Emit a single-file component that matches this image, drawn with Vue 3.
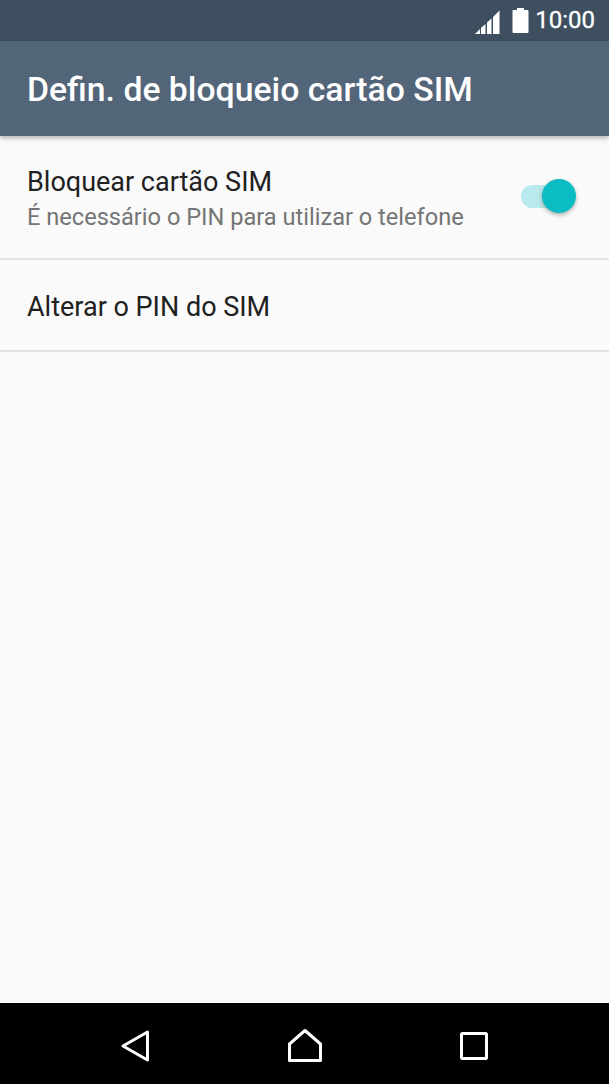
<script setup>
const rows = [
  { title: "Bloquear cartão SIM", sub: "É necessário o PIN para utilizar o telefone", toggle: true },
  { title: "Alterar o PIN do SIM" },
];
</script>

<template>
  <div class="screen">
    <div class="status">
      <svg class="signal" width="25" height="24" viewBox="0 0 25 24">
        <path d="M0 24 L5 19 V24 Z M6 18 L10.5 14 V24 H6 Z M12 12.5 L16.5 8.5 V24 H12 Z M18 7 L24.5 0.5 V24 H18 Z" fill="#fff" />
      </svg>
      <svg class="battery" width="17" height="25" viewBox="0 0 17 25">
        <path d="M5 0 H12 V2 H15.5 Q16.5 2 16.5 3 V24 Q16.5 25 15.5 25 H1.5 Q0.5 25 0.5 24 V3 Q0.5 2 1.5 2 H5 Z" fill="#fff" />
      </svg>
      <span class="clock">10:00</span>
    </div>
    <header class="bar">Defin. de bloqueio cartão SIM</header>
    <main class="list">
      <div v-for="row in rows" :key="row.title" class="row" :class="{ tall: row.sub }">
        <div class="texts">
          <div class="title">{{ row.title }}</div>
          <div v-if="row.sub" class="sub">{{ row.sub }}</div>
        </div>
        <div v-if="row.toggle" class="switch"><span class="knob"></span></div>
      </div>
    </main>
    <nav class="nav">
      <svg width="28" height="32" viewBox="0 0 28 32">
        <path d="M2 16 L26.5 2 V30 Z" fill="none" stroke="#fff" stroke-width="3" stroke-linejoin="round" />
      </svg>
      <svg width="34" height="33" viewBox="0 0 34 33">
        <path d="M1.5 31.5 V15 L17 1.5 L32.5 15 V31.5 Z" fill="none" stroke="#fff" stroke-width="3" stroke-linejoin="round" />
      </svg>
      <svg width="28" height="28" viewBox="0 0 28 28">
        <rect x="1.5" y="1.5" width="25" height="25" rx="1" fill="none" stroke="#fff" stroke-width="3" />
      </svg>
    </nav>
  </div>
</template>

<style>
html, body { margin: 0; background: #fafafa; }
</style>

<style scoped>
.screen {
  width: 609px;
  height: 1084px;
  display: flex;
  flex-direction: column;
  background: #fafafa;
  font-family: Roboto, "Liberation Sans", sans-serif;
  overflow: hidden;
}
.status {
  height: 41px;
  flex: none;
  background: #3e5060;
  display: flex;
  align-items: center;
  justify-content: flex-end;
  padding-right: 14px;
  box-sizing: border-box;
  color: #fff;
}
.signal { margin-right: 12px; margin-top: 3px; }
.battery { margin-right: 6px; margin-top: -1px; }
.clock { font-size: 24px; line-height: 41px; -webkit-text-stroke: 0.3px #fff; }
.bar {
  height: 95px;
  flex: none;
  background: #526579;
  color: #fff;
  font-size: 33.75px;
  font-weight: 500;
  line-height: 98px;
  padding-left: 27px;
  box-shadow: 0 2px 5px rgba(0, 0, 0, 0.3);
  position: relative;
}
.list { flex: 1; }
.row {
  height: 92px;
  padding: 4px 40px 0 27px;
  box-sizing: border-box;
  display: flex;
  align-items: center;
  justify-content: space-between;
  border-bottom: 2px solid #e2e2e2;
}
.row.tall { height: 124px; padding-top: 0; }
.title { font-size: 27px; color: #212121; line-height: 34px; }
.sub { font-size: 23.6px; color: #757575; line-height: 36px; }
.row.tall .texts { margin-top: 5px; }
.switch {
  width: 48px;
  height: 23px;
  border-radius: 12px;
  background: #b9e9ec;
  position: relative;
  margin-top: -2px;
}
.knob {
  position: absolute;
  right: -7px;
  top: -6px;
  width: 34px;
  height: 34px;
  border-radius: 50%;
  background: #0cbcc4;
  box-shadow: 0 2px 4px rgba(0, 0, 0, 0.3);
}
.nav {
  height: 81px;
  flex: none;
  background: #000;
  display: flex;
  align-items: center;
  padding: 4px 0 0 121px;
  box-sizing: border-box;
}
.nav svg:nth-child(1) { margin-right: 139px; }
.nav svg:nth-child(2) { margin-right: 138px; }
</style>
